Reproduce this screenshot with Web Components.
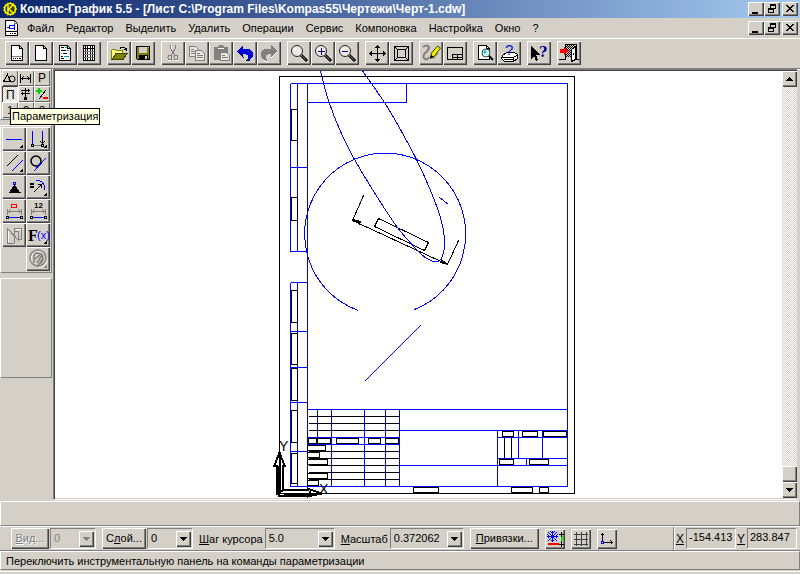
<!DOCTYPE html>
<html lang="ru">
<head>
<meta charset="utf-8">
<title>Компас-График 5.5</title>
<style>
html,body{margin:0;height:100%}
body{font:11px/14px "Liberation Sans",Arial,sans-serif;color:#000;background:#d4d0c8;overflow:hidden;
--face:#d4d0c8;--dark:#808080;--darker:#404040;
--raised:inset 1px 1px #fff,inset -1px -1px #404040,inset -2px -2px #808080}
</style>
</head>
<body>
<app-window></app-window>
<script>
const BASE = `*{box-sizing:border-box}svg{display:block;shape-rendering:crispEdges}
button,input,select{font:inherit;color:inherit;margin:0;border:0;padding:0;border-radius:0;background:var(--face);outline:0}`;
function define(name, css, html) {
  customElements.define(name, class extends HTMLElement {
    constructor() {
      super();
      this.attachShadow({ mode: 'open' }).innerHTML =
        `<style>${BASE}${css}</style>` + (typeof html === 'function' ? html(this) : html);
    }
  });
}
const page = 'M6.5 4.5h8l3 3v12h-11z', fold = 'M14.5 4.5v3h3';
const k = (d, s = '#000', f = 'none', w = 1) => `<path d="${d}" stroke="${s}" fill="${f}" stroke-width="${w}"/>`;
const fl = (d, f = '#000') => `<path d="${d}" fill="${f}"/>`;
const more = fl('M21 17v4h-4z');
const lens = '<g shape-rendering="geometricPrecision">' + k('M14 14l6 6', '#000', 'none', 3) + k('M14 14l5 5', '#808080') + '<circle cx="10" cy="10" r="5.5" fill="#ece9e2" stroke="#222"/>' + k('M7 10a3 3 0 0 1 3-3', '#fff') + '</g>';
const dims = k('M5.5 10v6M19.5 10v6M5 12.5h15M8.5 10.500l-2 2 2 2M16.500 10.500l2 2-2 2', '#808080') + k('M7 18.5h11', '#00f') + k('M4.5 17.5h2v2h-2zM18.5 17.5h2v2h-2z', '#000', '#fff');
const txt = (x, y, s, t, e = '') => `<text x="${x}" y="${y}" font-size="${s}" ${e}>${t}</text>`;
const ICONS = {
  sheet: k(page, '#000', '#fff') + k(fold) + k('M7 15.5h10', '#808080') + fl('M8 17h1v1h-1zM10 17h1v1h-1zM12 17h1v1h-1zM14 17h2v1h-2z'),
  blank: k(page, '#000', '#fff') + k(fold),
  text: k(page, '#000', '#fff') + k(fold) + k('M8 6.5h3M8 9.5h5M10 12.5h4M8 15.5h2M8 17.5h3') + k('M12 6.5h2M14 9.5h2M8 12.5h1M11 15.5h5', '#00a0b0'),
  spec: k('M6.5 4.5h11v15h-11z', '#000', '#fff') + k('M8.5 5v14M10.5 5v14M13.5 5v14M15.5 5v14M7 7.5h10') + k('M7 10.5h10M7 13.5h10M7 16.5h10', '#808080'),
  open: k('M4.5 18V9.5l1-1h3l1 1h6v3', '#808000', '#ffff80') + k('M5 18.5l4-6h11l-4 6z', '#404000', '#808000') + k('M13 7.5q3-3 6 0v2M17 8.5h3'),
  save: k('M5.5 5.5h13v13h-12l-1-1z', '#000', '#808000') + fl('M8 6h8v6h-8z', '#d4d0c8') + fl('M8 14h9v5h-9z') + fl('M14 15h2v3h-2zM17 6h1v1h-1z', '#d4d0c8'),
  cut: k('M9.5 4v3l4 7M14.5 4v3l-4 7', '#808080') + '<g fill="none" stroke="#808080"><circle cx="9" cy="16.5" r="2"/><circle cx="15" cy="16.5" r="2"/></g>' + k('M10.5 5v3M7 19.5h3M14 19.5h3', '#fff'),
  copy: k('M4.5 5.5h6l3 3v7h-9z', '#808080', '#e8e6e0') + k('M10.5 9.5h6l3 3v7h-9z', '#808080', '#e8e6e0') + k('M6 8.5h3M6 10.5h4M6 12.5h4M12 12.5h3M12 14.5h6M12 16.5h6', '#808080'),
  paste: fl('M5 6h4l1-2h4l1 2h4v13H5z', '#808080') + k('M9 7.5h6', '#fff') + k('M11.5 11.5h6l3 3v5h-9z', '#808080', '#e8e6e0') + k('M13 14.5h3M13 16.5h6', '#808080'),
  undo: fl('M4 10l6-6v4h4q6 0 6 6 0 4-6 6v-1q2-2 1-4-1-2-5-2v4z', '#0000d8') + k('M6 12l5 5M13 19.5h4', '#000040'),
  redo: fl('M20 10l-6-6v4h-4q-6 0-6 6 0 4 6 6v-1q-2-2-1-4 1-2 5-2v4z', '#808080') + k('M20 11l-6 6M8 20.5h3', '#fff'),
  zoom: lens, zoomin: lens + k('M7 10.5h7M10.5 7v7', '#000080'), zoomout: lens + k('M7 10.5h6', '#000080'),
  pan: k('M4 12.5h16M12.5 5v15') + fl('M12 4h1l2 3h-5zM12 21h1l2-3h-5zM4 12v1l3 2v-5zM21 12v1l-3 2v-5z'),
  fit: k('M5.5 5.5h14v14h-14zM8.5 8.5h8v8h-8zM5.5 5.5l3 3M19.5 5.5l-3 3M5.5 19.5l3-3M19.5 19.5l-3-3'),
  draw: '<g shape-rendering="geometricPrecision">' + k('M4 6q4-3 6 0 0 3-4 6-3 4 0 6 3 1 4-2', '#808080', 'none', 2) + k('M11.5 17l1-5 6-7 3 2-6 8z', '#404000', '#f0f000') + fl('M11 18l1-4 3 2z') + k('M19 12l-5 6', '#808000') + '</g>',
  layout: k('M4.5 6.5h15v12h-15zM9.5 18v-4.500h10M9 16.500h10M14.5 14v4'),
  preview: k('M5.5 4.5h8l3 3v11h-11z', '#000', '#fff') + k('M13.5 4.5v3h3') + '<g shape-rendering="geometricPrecision"><circle cx="13" cy="12" r="4" fill="#cff" stroke="#404040"/>' + k('M16 15l4 4', '#000', 'none', 2) + k('M11 12l2-2', '#00b0c0', 'none', 2) + '</g>',
  printer: k('M5.5 14.5l4-3h8l3 2v4l-4 3h-9l-3-3z', '#000', '#fff') + k('M5 16.5h11l4-2M7 18.5h9M16.5 17v3') + txt(8, 14, 15, '?', 'fill="#0018e0"'),
  help: fl('M4 5v13l3-3 2 5 2-1-2-5h4z') + txt(12, 16, 14, '?', 'fill="#000090" font-weight="bold" font-family="DejaVu Serif,serif"'),
  exit: '<defs><pattern id="h" width="2" height="2" patternUnits="userSpaceOnUse"><path d="M0 0h1v1h-1zM1 1h1v1h-1z"/></pattern></defs>' + k('M2 18.5h6v-15h11v15h3') + '<path d="M8 4h10v12h-10z" fill="url(#h)"/>' + k('M14.5 20.5V8.500l4-3v13z', '#000', '#fff') + k('M16.5 12v2') + fl('M3 8h4V5l4 5-4 5v-3H3z', '#f00'),
  segment: k('M4 12.5h16', '#00f') + more,
  vertical: k('M6.5 4v13M16.5 4v7', '#00f') + k('M8 18.5h7', '#808080') + k('M16.5 11v6M14.500 14.500l2 2 2-2M5.5 17.5h2v2h-2zM15.5 17.5h2v2h-2z') + more,
  parallel: k('M4.5 15.5L15.5 4.5') + k('M9.500 20.5L20.5 9.500', '#00f') + more,
  tangent: '<circle cx="10" cy="10" r="5" fill="none" stroke="#000" stroke-width="1.500" shape-rendering="auto"/>' + k('M7.500 20.500L19.500 7.500', '#00f'),
  fix: fl('M12 10h1l4 6v1H8v-1z') + k('M7 17.5h12') + k('M11.5 7.5h2v2h-2z', '#00f'),
  equal: k('M4 8.5h4M4 11.5h4', '#000', 'none', 2) + k('M7.500 17.500l8-8M12 9.5h3.5v3') + k('M10 5.5q8-1 9 9', '#00f') + more,
  dimred: dims + k('M9.5 5.5h5v3h-5z', '#f00'),
  dimnum: dims + txt(8, 9, 8, '12', 'font-weight="bold"'),
  mirror: k('M5.5 5v15h6M5.5 5.500l12 13M12.5 20V5.500h7v11h-3v-8h-4', '#808080') + k('M6.5 8v11M13.500 6.500h5', '#fff'),
  func: txt(2, 18, 16, 'F', 'font-weight="bold" font-family="Liberation Serif"') + txt(11, 16, 11, '(x)', 'fill="#00f"') + more,
  pick: '<g shape-rendering="geometricPrecision"><g fill="none" stroke="#fff"><circle cx="13" cy="12" r="8"/></g><g fill="none" stroke="#808080" stroke-width="1.500"><circle cx="12" cy="11" r="8"/><path d="M8 16V9q0-3 3-3l4 1q3 2 1 6l-5 7M11 16l5-8M9 12l5-4M13 17q4-2 4-6"/></g></g>' + fl('M21 17v4h-4z', '#808080'),
  geometry: k('M1.5 11.5h7L5.500 4.5z', '#000', 'none') + '<circle cx="10" cy="9" r="3" fill="none" stroke="#000" shape-rendering="auto"/>',
  size: k('M2.5 4v9M12.5 4v9M3 8.5h9M5.5 6.500l-2 2 2 2M9.5 6.500l2 2-2 2'),
  P: txt(4, 12, 12, 'P'), param: txt(4, 13, 12, 'П'),
  edit: k('M3 4.5h9M3 7.5h9M7.5 2v11M10.500 3v3M4.500 6v3') + fl('M6 11h3v3h-3z'),
  measure: k('M4.500 2v6M2 5h6', '#00d000', 'none', 2) + k('M5 13l7-9') + k('M9 12h5', '#f00', 'none', 2),
  1: txt(5, 12, 11, '1'), 2: txt(5, 12, 11, '2'), 3: txt(5, 12, 11, '3'),
  snap: k('M7.5 2v11M2 7.5h11M3 3l9 9M12 3l-9 9M5.5 2.5l2 2 2-2M5.5 12.5l2-2 2 2M2.5 5.5l2 2-2 2M12.5 5.5l-2 2 2 2', '#00f') + k('M3 15h11', '#f00', 'none', 2) + k('M16.5 7v5', '#0f0', 'none', 2) + k('M16.5 3v5M14 5.5h5M16.5 12v6M14 15.5h5'),
  grid: k('M3 5.5h14M3 10.5h14M3 15.5h14M5.5 3v14M10.5 3v14M15.5 3v14', '#404040'),
  axes: k('M5.5 4v8M3.500 6.500l2-2 2 2M7 13.5h9M13.500 11.500l2 2-2 2') + k('M4.5 12.5h2v2h-2z', '#00f', '#fff'),
  min: fl('M4 10h6v2H4z'), close: k('M4 3l7 7M5 3l7 7M11 3l-7 7M12 3l-7 7'),
  restore: k('M6.5 2.5h5v4h-5zM6 3.5h6') + k('M4.5 6.5h5v4h-5z', '#000', '#d4d0c8') + k('M4 7.5h6'),
  down: fl('M4 6h7v1h-1v1h-1v1h-1v1h-1v-1h-1v-1h-1v-1h-1z'), up: fl('M4 10h7v-1h-1v-1h-1v-1h-1v-1h-1v1h-1v1h-1v1h-1z')
};

define('push-button', `:host{display:block;flex:none;width:24px;height:24px}
:host([kind=small]){width:16px;height:16px}:host([kind=bar]){width:20px;height:20px}
:host([kind=window]){width:16px;height:14px}:host([kind=scroll]){width:15px;height:16px}
button{display:block;width:100%;height:100%;overflow:hidden;box-shadow:var(--raised)}
:host([kind=small]) button{box-shadow:inset 1px 1px #fff,inset -1px -1px #606060}
:host([pressed]) button{box-shadow:inset 1px 1px #404040,inset -1px -1px #fff;background:repeating-conic-gradient(#fff 0 25%,#d4d0c8 0 50%) 0 0/2px 2px}`,
  el => {
    const [w, h] = { small: [16, 16], bar: [20, 20], window: [16, 14], scroll: [15, 16] }[el.getAttribute('kind')] || [24, 24];
    return `<button type="button" aria-label="${el.getAttribute('label') || ''}" ${el.hasAttribute('disabled') ? 'disabled' : ''} ${el.hasAttribute('pressed') ? 'aria-pressed="true"' : ''}><svg width="${w}" height="${h}" viewBox="0 0 ${w} ${h}" aria-hidden="true">${ICONS[el.getAttribute('icon')] || ''}</svg></button>`;
  });
const btn = (icon, label, kind = '', extra = '') => `<push-button icon="${icon}" label="${label}" kind="${kind}" ${extra}></push-button>`;

define('window-buttons', `:host{display:flex;margin-left:auto;padding-right:2px}push-button:last-child{margin-left:2px}`,
  btn('min', 'Свернуть', 'window') + btn('restore', 'Восстановить', 'window') + btn('close', 'Закрыть', 'window'));

define('title-bar', `:host{display:flex;align-items:center;height:18px;flex:none;padding-left:3px;gap:3px;background:linear-gradient(90deg,#0a246a,#a6caf0);color:#fff}
h1{margin:0;font-size:12px;line-height:16px;font-weight:bold;white-space:nowrap}`,
  `<svg width="14" height="14" viewBox="0 0 14 14" aria-hidden="true" style="shape-rendering:auto"><circle cx="7" cy="7" r="5.500" fill="#404000" stroke="#ff0" stroke-width="1.500"/><circle cx="7" cy="7" r="6.500" fill="none" stroke="#ff0" stroke-dasharray="1 2"/><path d="M5 3v8M10 3L6 7l4 4" fill="none" stroke="#ff0" stroke-width="1.500"/></svg><h1><slot></slot></h1><window-buttons></window-buttons>`);

define('menu-bar', `:host{display:flex;align-items:center;height:21px;flex:none;padding-left:5px;border-bottom:1px solid #fff}
nav{display:flex;gap:12px;padding-left:8px}button{white-space:nowrap}`,
  `<svg width="14" height="16" viewBox="0 0 14 16" aria-hidden="true"><path d="M.5 .5h9l3 3v12h-12z" fill="#fff" stroke="#000"/><path d="M9.500 .5v3h3" fill="none" stroke="#808080"/><path d="M4.500 5.500h5v3h-5zM2 7.500h2M9.500 4v6" fill="none" stroke="#00f"/><path d="M1 11.500h11M5 13.500h1M7 13.500h1M9 13.500h2" stroke="#000"/></svg>
<nav>${['Файл', 'Редактор', 'Выделить', 'Удалить', 'Операции', 'Сервис', 'Компоновка', 'Настройка', 'Окно', '?'].map(t => `<button type="button">${t}</button>`).join('')}</nav><window-buttons></window-buttons>`);

define('tool-bar', `:host{display:flex;gap:6px;flex:none;height:30px;padding:2px 5px 3px;border-bottom:1px solid #808080;box-shadow:0 1px #fff}div{display:flex}`,
  [[['sheet', 'Новый лист'], ['blank', 'Новый фрагмент'], ['text', 'Новый текст'], ['spec', 'Новая спецификация']],
  [['open', 'Открыть'], ['save', 'Сохранить']],
  [['cut', 'Вырезать', 1], ['copy', 'Копировать', 1], ['paste', 'Вставить', 1], ['undo', 'Отменить'], ['redo', 'Повторить', 1]],
  [['zoom', 'Рамкой'], ['zoomin', 'Крупнее'], ['zoomout', 'Мельче']],
  [['pan', 'Сдвинуть'], ['fit', 'Показать все']], [['draw', 'Обновить'], ['layout', 'Основная надпись']],
  [['preview', 'Просмотр'], ['printer', 'Справка по печати']], [['help', 'Что это такое?']], [['exit', 'Выход']]]
    .map(g => `<div>${g.map(b => btn(b[0], b[1], '', b[2] ? 'disabled' : '')).join('')}</div>`).join(''));

define('tool-palette', `:host{display:flex;flex-direction:column;flex:none;width:53px;gap:5px}
section{border-right:1px solid #808080;border-bottom:1px solid #808080;border-left:1px solid #fff;border-top:1px solid #fff;margin-right:1px;padding-left:1px}
.modes{position:relative;display:grid;grid-template-columns:repeat(3,16px);padding-bottom:1px;border-top:0;padding-top:1px}
.tools{display:grid;grid-template-columns:24px 24px;padding-top:1px;padding-bottom:1px}.tools :last-child{grid-column:2}
.empty{height:100px}
[role=tooltip]{position:absolute;left:9px;top:39px;z-index:2;padding:0 1px;border:1px solid #000;background:#ffffe1;line-height:15px;white-space:nowrap}`,
  `<section class="modes">${btn('geometry', 'Геометрия', 'small') + btn('size', 'Размеры', 'small') + btn('P', 'Редактирование', 'small') + btn('param', 'Параметризация', 'small', 'pressed') + btn('edit', 'Выравнивание', 'small') + btn('measure', 'Измерения', 'small') + btn('1', 'Панель 1', 'small') + btn('2', 'Панель 2', 'small') + btn('3', 'Панель 3', 'small')}<div role="tooltip">Параметризация</div></section>
<section class="tools">${[['segment', 'Горизонталь'], ['vertical', 'Вертикальное выравнивание'], ['parallel', 'Параллельность'], ['tangent', 'Касание'], ['fix', 'Фиксировать точку'], ['equal', 'Равенство'], ['dimred', 'Фиксировать размер'], ['dimnum', 'Значение размера'], ['mirror', 'Симметрия'], ['func', 'Уравнения'], ['pick', 'Параметризовать']].map((b, i) => btn(b[0], b[1], '', i == 8 || i == 10 ? 'disabled' : '')).join('')}</section>
<section class="empty"></section>`);

// Catmull-Rom spline through the given points.
function spline(p) {
  let d = `M${p[0]}`;
  for (let i = 0; i < p.length - 1; i++) {
    const a = p[i - 1] || p[i], b = p[i], c = p[i + 1], e = p[i + 2] || c;
    d += `C${b[0] + (c[0] - a[0]) / 6} ${b[1] + (c[1] - a[1]) / 6} ${c[0] - (e[0] - b[0]) / 6} ${c[1] - (e[1] - b[1]) / 6} ${c}`;
  }
  return d;
}
const box = ([x, y, X, Y]) => `M${x} ${y}H${X}V${Y}H${x}z`;
const hl = (y, x, X) => `M${x} ${y}H${X}`, vl = (x, y, Y) => `M${x} ${y}V${Y}`;
const blue = [
  box([307, 83, 567, 486]), vl(290, 83, 251), vl(297, 83, 251), vl(290, 282, 486), vl(297, 282, 486), hl(83, 290, 307),
  ...[167, 251, 282, 331, 367, 402, 451, 486].map(y => hl(y, 290, 307)), 'M307 102H406V83',
  'M358 310A80.5 81 0 1 1 414 309', 'M439 197l9 7M364 381L420 325',
  spline([[319.5, 69], [328, 100], [340, 131], [354, 159], [377, 197], [397, 227], [418, 251], [428, 259], [438, 261], [443, 252], [444, 238], [440, 217], [430, 190], [416, 159], [401, 131], [384, 102], [361, 69]]),
  hl(409, 307, 567), hl(437, 307, 399), hl(444, 307, 399), vl(317, 409, 437), ...[331, 364, 385, 399].map(x => vl(x, 409, 486)),
  hl(430, 399, 567), hl(465, 399, 567), vl(497, 430, 486), hl(437, 497, 567), vl(518, 430, 458), vl(542, 430, 458), hl(458, 497, 567), vl(526, 458, 465)
].join('');
const black = [
  ...[416, 423, 430, 451, 458, 465, 472, 479].map(y => hl(y, 308, 398)), box([279, 76, 574, 493]),
  'M363 195L352 220L447 264L458 240M378 218L428 242L424 250L374 226z', vl(504, 437, 458), vl(511, 437, 458)
].join('');
const boxes = [
  ...[[109, 140], [197, 220], [290, 322], [333, 364], [368, 400], [410, 442], [453, 483]].map(([a, b]) => [291, a, 297, b]),
  ...[[308, 316], [317, 330], [336, 358], [368, 380], [385, 398]].map(([a, b]) => [a, 438, b, 443]),
  ...[[445, 325], [452, 319], [459, 327], [473, 327], [480, 318]].map(([y, x]) => [307, y, x, y + 5]),
  [502, 431, 513, 436], [522, 431, 537, 436], [543, 431, 566, 436], [499, 459, 513, 464], [529, 459, 548, 464],
  [413, 487, 438, 492], [511, 487, 532, 492], [539, 487, 548, 492]
].map(box).join('');

define('drawing-canvas', `:host{display:block;flex:1;min-width:0;background:#fff}svg{width:100%;height:100%}text{font-size:14px;fill:#000}`,
  `<svg viewBox="55 71 727 427" role="img" aria-label="Чертёж"><g transform="translate(.5 .5)" fill="none">
<path d="${black}" stroke="#000"/><path d="${blue}" stroke="#00f"/><path d="${boxes}" fill="#fff" stroke="#000"/>
<path d="M353 219l7 2-1 3zM447 264l-7-2 1-3z" fill="#000" stroke="#000"/>
<path d="M276 494V465H274L279 452L284 465H282V489H307V488L321 493L307 496V495H278V465M276 490h6M309 490v5M283 493h36M279 455v37" stroke="#000" stroke-width="2"/></g>
<text x="279" y="451">Y</text><text x="319" y="494">X</text></svg>`);

define('scroll-bar', `:host{display:flex;flex-direction:column;flex:none;width:15px;background:repeating-conic-gradient(#fff 0 25%,#d4d0c8 0 50%) 0 0/2px 2px}
push-button:nth-last-child(2){margin-top:auto}`,
  btn('up', 'Вверх', 'scroll') + btn('', 'Ползунок', 'scroll') + btn('down', 'Вниз', 'scroll'));

define('work-area', `:host{display:flex;flex:1;min-height:0;padding-right:3px}
.view{display:flex;flex:1;min-width:0;border-left:1px solid #808080;border-top:1px solid #808080;border-bottom:1px solid #fff;box-shadow:inset 1px 1px #404040,inset 0 -1px #d4d0c8;padding:1px 0 1px 1px;margin-bottom:1px}`,
  `<tool-palette></tool-palette><div class="view"><drawing-canvas></drawing-canvas><scroll-bar></scroll-bar></div>`);

define('text-button', `:host{display:block;flex:none}button{display:block;width:100%;height:21px;box-shadow:var(--raised);line-height:21px;white-space:nowrap}
button:disabled{color:#808080;text-shadow:1px 1px #fff}`,
  el => `<button type="button" ${el.hasAttribute('disabled') ? 'disabled' : ''}><slot></slot></button>`);

define('combo-field', `:host{display:flex;align-items:center;gap:2px;flex:none}label{white-space:nowrap;padding-top:1px}
span{position:relative;display:block;width:var(--w)}
select{appearance:none;display:block;width:100%;height:21px;padding:0 18px 2px 3px;border:1px solid;border-color:#808080 #fff #fff #808080}
select:disabled{color:#808080;opacity:1}
svg{position:absolute;right:2px;top:3px;pointer-events:none;background:var(--face);box-shadow:var(--raised)}`,
  el => {
    const l = el.getAttribute('label'), off = el.hasAttribute('disabled');
    return `${l ? `<label for="f"><u>${l[0]}</u>${l.slice(1)}</label>` : ''}<span><select id="f" aria-label="${l || el.getAttribute('name')}" ${off ? 'disabled' : ''}><option>${el.getAttribute('value')}</option></select><svg width="15" height="16" viewBox="0 0 15 16" aria-hidden="true">${off ? ICONS.down.replace('#000', '#808080') : ICONS.down}</svg></span>`;
  });

define('coord-field', `:host{display:flex;align-items:center;gap:2px}label{font-size:12px;padding-top:1px}
input{width:50px;height:21px;padding:0 0 3px 2px;border:1px solid;border-color:#808080 #fff #fff #808080}`,
  el => `<label for="c"><u>${el.getAttribute('label')}</u></label><input id="c" type="text" value="${el.getAttribute('value')}">`);

define('view-controls', `:host{display:flex;align-items:center;flex:none;height:25px;padding:0 3px 0 11px;gap:6px;border-top:1px solid #fff;border-bottom:1px solid #808080}
div{display:flex;gap:1px}.coords{margin-left:auto;align-self:stretch;align-items:center;border-left:1px solid #808080;box-shadow:inset 1px 0 #fff;padding-left:2px}`,
  `<div><text-button disabled style="width:38px"><u>В</u>ид...</text-button><combo-field name="Вид" value="0" disabled style="--w:46px"></combo-field></div>
<div><text-button style="width:44px">С<u>л</u>ой...</text-button><combo-field name="Слой" value="0" style="--w:46px"></combo-field></div>
<combo-field label="Шаг курсора" value="5.0" style="--w:70px"></combo-field>
<combo-field label="Масштаб" value="0.372062" style="--w:74px"></combo-field>
<text-button style="width:69px"><u>П</u>ривязки...</text-button>
${btn('snap', 'Привязки', 'bar') + btn('grid', 'Сетка', 'bar') + btn('axes', 'Локальная СК', 'bar')}
<div class="coords"><coord-field label="X" value="-154.413"></coord-field><coord-field label="Y" value="283.847"></coord-field></div>`);

define('property-strip', `:host{display:block;flex:none;height:25px;border:1px solid;border-color:#fff #808080 #808080 #fff}`, '');
define('status-bar', `:host{display:block;flex:none;height:23px;padding:0 0 2px;}
p{margin:0;height:19px;padding:2px 5px 0;border:1px solid;border-color:#fff #808080 #808080 #fff;white-space:nowrap}
i{display:block;height:1px;margin-top:1px;background:#fff}`, `<p role="status"><slot></slot></p><i></i>`);

define('app-window', `:host{display:flex;flex-direction:column;height:100vh;background:var(--face)}`,
  `<title-bar>Компас-График 5.5 - [Лист C:\\Program Files\\Kompas55\\Чертежи\\Черт-1.cdw]</title-bar>
<menu-bar></menu-bar><tool-bar></tool-bar><work-area></work-area><property-strip></property-strip><view-controls></view-controls>
<status-bar>Переключить инструментальную панель на команды параметризации</status-bar>`);
</script>
</body>
</html>
